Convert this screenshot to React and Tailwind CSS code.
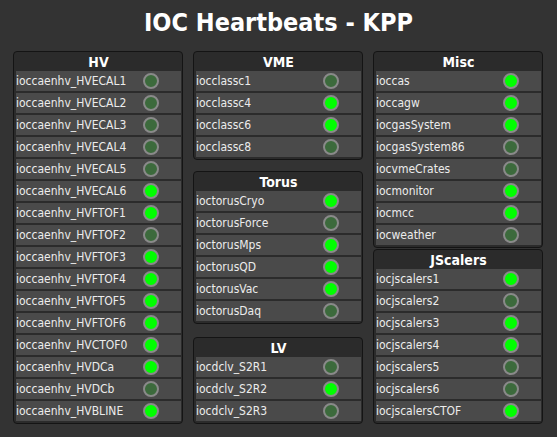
import React from 'react';

const panels = {
    hv: {
        title: 'HV',
        items: [
            ['ioccaenhv_HVECAL1', 0], ['ioccaenhv_HVECAL2', 0], ['ioccaenhv_HVECAL3', 0],
            ['ioccaenhv_HVECAL4', 0], ['ioccaenhv_HVECAL5', 0], ['ioccaenhv_HVECAL6', 1],
            ['ioccaenhv_HVFTOF1', 1], ['ioccaenhv_HVFTOF2', 0], ['ioccaenhv_HVFTOF3', 1],
            ['ioccaenhv_HVFTOF4', 1], ['ioccaenhv_HVFTOF5', 1], ['ioccaenhv_HVFTOF6', 1],
            ['ioccaenhv_HVCTOF0', 1], ['ioccaenhv_HVDCa', 1], ['ioccaenhv_HVDCb', 0],
            ['ioccaenhv_HVBLINE', 1],
        ],
    },
    vme: {
        title: 'VME',
        items: [['iocclassc1', 0], ['iocclassc4', 1], ['iocclassc6', 1], ['iocclassc8', 0]],
    },
    torus: {
        title: 'Torus',
        items: [
            ['ioctorusCryo', 1], ['ioctorusForce', 0], ['ioctorusMps', 1],
            ['ioctorusQD', 1], ['ioctorusVac', 1], ['ioctorusDaq', 0],
        ],
    },
    lv: {
        title: 'LV',
        items: [['iocdclv_S2R1', 0], ['iocdclv_S2R2', 1], ['iocdclv_S2R3', 0]],
    },
    misc: {
        title: 'Misc',
        items: [
            ['ioccas', 1], ['ioccagw', 1], ['iocgasSystem', 1], ['iocgasSystem86', 0],
            ['iocvmeCrates', 0], ['iocmonitor', 1], ['iocmcc', 1], ['iocweather', 0],
        ],
    },
    jscalers: {
        title: 'JScalers',
        items: [
            ['iocjscalers1', 1], ['iocjscalers2', 0], ['iocjscalers3', 1], ['iocjscalers4', 1],
            ['iocjscalers5', 0], ['iocjscalers6', 0], ['iocjscalersCTOF', 1],
        ],
    },
};

function Led({ on }) {
    return (
        <div
            className={
                'w-4 h-4 rounded-full border-2 border-[#8a8a8a] ' +
                (on ? 'bg-[#00ff00]' : 'bg-[#3c6a3c]')
            }
        />
    );
}

function Panel({ data, className = '' }) {
    return (
        <div className={'w-[170px] border border-[#141414] rounded-[4px] bg-[#2b2b2b] pl-[2px] pr-px pb-[2px] ' + className}>
            <div className="h-[19px] flex items-center justify-center text-[14px] font-bold text-white leading-none">
                {data.title}
            </div>
            <div className="flex flex-col gap-[2px]">
                {data.items.map(([name, on]) => (
                    <div key={name} className="h-5 bg-[#4a4a4a] flex items-center justify-between pr-[22px] text-[12px] text-[#ececec] leading-none">
                        <span>{name}</span>
                        <Led on={on} />
                    </div>
                ))}
            </div>
        </div>
    );
}

export default function App() {
    return (
        <div
            className="w-[557px] h-[437px] bg-[#333333] overflow-hidden"
            style={{ fontFamily: '"DejaVu Sans Condensed", "DejaVu Sans", sans-serif' }}
        >
            <div className="h-[51px] flex items-center justify-center pb-[7px]">
                <h1 className="text-[25px] font-bold text-white leading-none">IOC Heartbeats - KPP</h1>
            </div>
            <div className="flex gap-[10px] pl-[13px]">
                <div className="flex flex-col">
                    <Panel data={panels.hv} />
                </div>
                <div className="flex flex-col">
                    <Panel data={panels.vme} />
                    <Panel data={panels.torus} className="mt-[11px]" />
                    <Panel data={panels.lv} className="mt-[13px]" />
                </div>
                <div className="flex flex-col">
                    <Panel data={panels.misc} />
                    <Panel data={panels.jscalers} className="mt-px" />
                </div>
            </div>
        </div>
    );
}
